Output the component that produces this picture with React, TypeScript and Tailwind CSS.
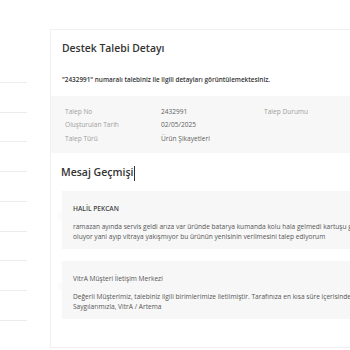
import React from 'react';

const sideItems = Array.from({ length: 9 });

const infoRows = [
  { label: 'Talep No', value: '2432991', extra: 'Talep Durumu' },
  { label: 'Oluşturulan Tarih', value: '02/05/2025', extra: '' },
  { label: 'Talep Türü', value: 'Ürün Şikayetleri', extra: '' },
];

const messages = [
  {
    author: 'HALİL PEKCAN',
    upper: true,
    lines: [
      'ramazan ayında servis geldi arıza var üründe batarya kumanda kolu hala gelmedi kartuşu gelmedi sürekli arıza',
      'oluyor yani ayıp vitraya yakışmıyor bu ürünün yenisinin verilmesini talep ediyorum',
    ],
  },
  {
    author: 'VitrA Müşteri İletişim Merkezi',
    upper: false,
    lines: [
      'Değerli Müşterimiz, talebiniz ilgili birimlerimize iletilmiştir. Tarafınıza en kısa süre içerisinde dönüş sağlanacaktır.',
      'Saygılarımızla, VitrA / Artema',
    ],
  },
];

const App: React.FC = () => {
  return (
    <div className="w-[350px] h-[350px] bg-white overflow-hidden flex font-['Open_Sans',sans-serif]">
      {/* Left menu remnants */}
      <div className="w-[27px] shrink-0 pt-[53px] flex flex-col">
        {sideItems.map((_, i) => (
          <div key={i} className="h-[29.75px] border-b border-[#ececec]" />
        ))}
      </div>

      {/* Detail card */}
      <div className="ml-[23px] mt-[29px] h-[319px] w-[420px] shrink-0 border-l border-t border-b border-[#f0f0f0] flex flex-col">
        <h1 className="pl-[11px] pt-[10px] text-[10.4px] leading-[16px] font-semibold text-[#333]">
          Destek Talebi Detayı
        </h1>
        <p className="pl-[11px] mt-[19px] text-[6.4px] leading-[10px] font-semibold text-[#333]">
          "2432991" numaralı talebiniz ile ilgili detayları görüntülemektesiniz.
        </p>

        <div className="mt-[11px] bg-[#f7f7f7] h-[57px] pl-[14px] pt-[9px] flex flex-col">
          {infoRows.map((r) => (
            <div key={r.label} className="flex h-[13.5px] items-center text-[6.6px]">
              <span className="w-[96px] text-[#a0a0a0]">{r.label}</span>
              <span className="w-[103px] text-[#5f5f5f]">{r.value}</span>
              <span className="text-[#a0a0a0]">{r.extra}</span>
            </div>
          ))}
        </div>

        <div className="pl-[10px] mt-[12px] flex items-center h-[16px]">
          <span className="text-[10.5px] font-semibold text-[#333]">Mesaj Geçmişi</span>
          <span className="ml-[1px] w-px h-[15px] bg-[#333]" />
        </div>

        <div className="pl-[11px] mt-[10px] flex flex-col gap-[12px]">
          {messages.map((m) => (
            <div key={m.author} className="relative bg-[#f7f7f7] h-[58px] pl-[11px] pt-[13px]">
              <span className="absolute left-[-5px] top-[20px] w-0 h-0 border-y-[5px] border-y-transparent border-r-[5px] border-r-[#fafafa]" />
              <div className={`text-[6.6px] leading-[9px] ${m.upper ? 'font-semibold text-[#444]' : 'text-[#555]'}`}>
                {m.author}
              </div>
              <div className="mt-[9px] flex flex-col">
                {m.lines.map((l, i) => (
                  <div key={i} className="whitespace-nowrap text-[6.6px] leading-[10px] text-[#555]">
                    {l}
                  </div>
                ))}
              </div>
            </div>
          ))}
        </div>
      </div>
    </div>
  );
};

export default App;
